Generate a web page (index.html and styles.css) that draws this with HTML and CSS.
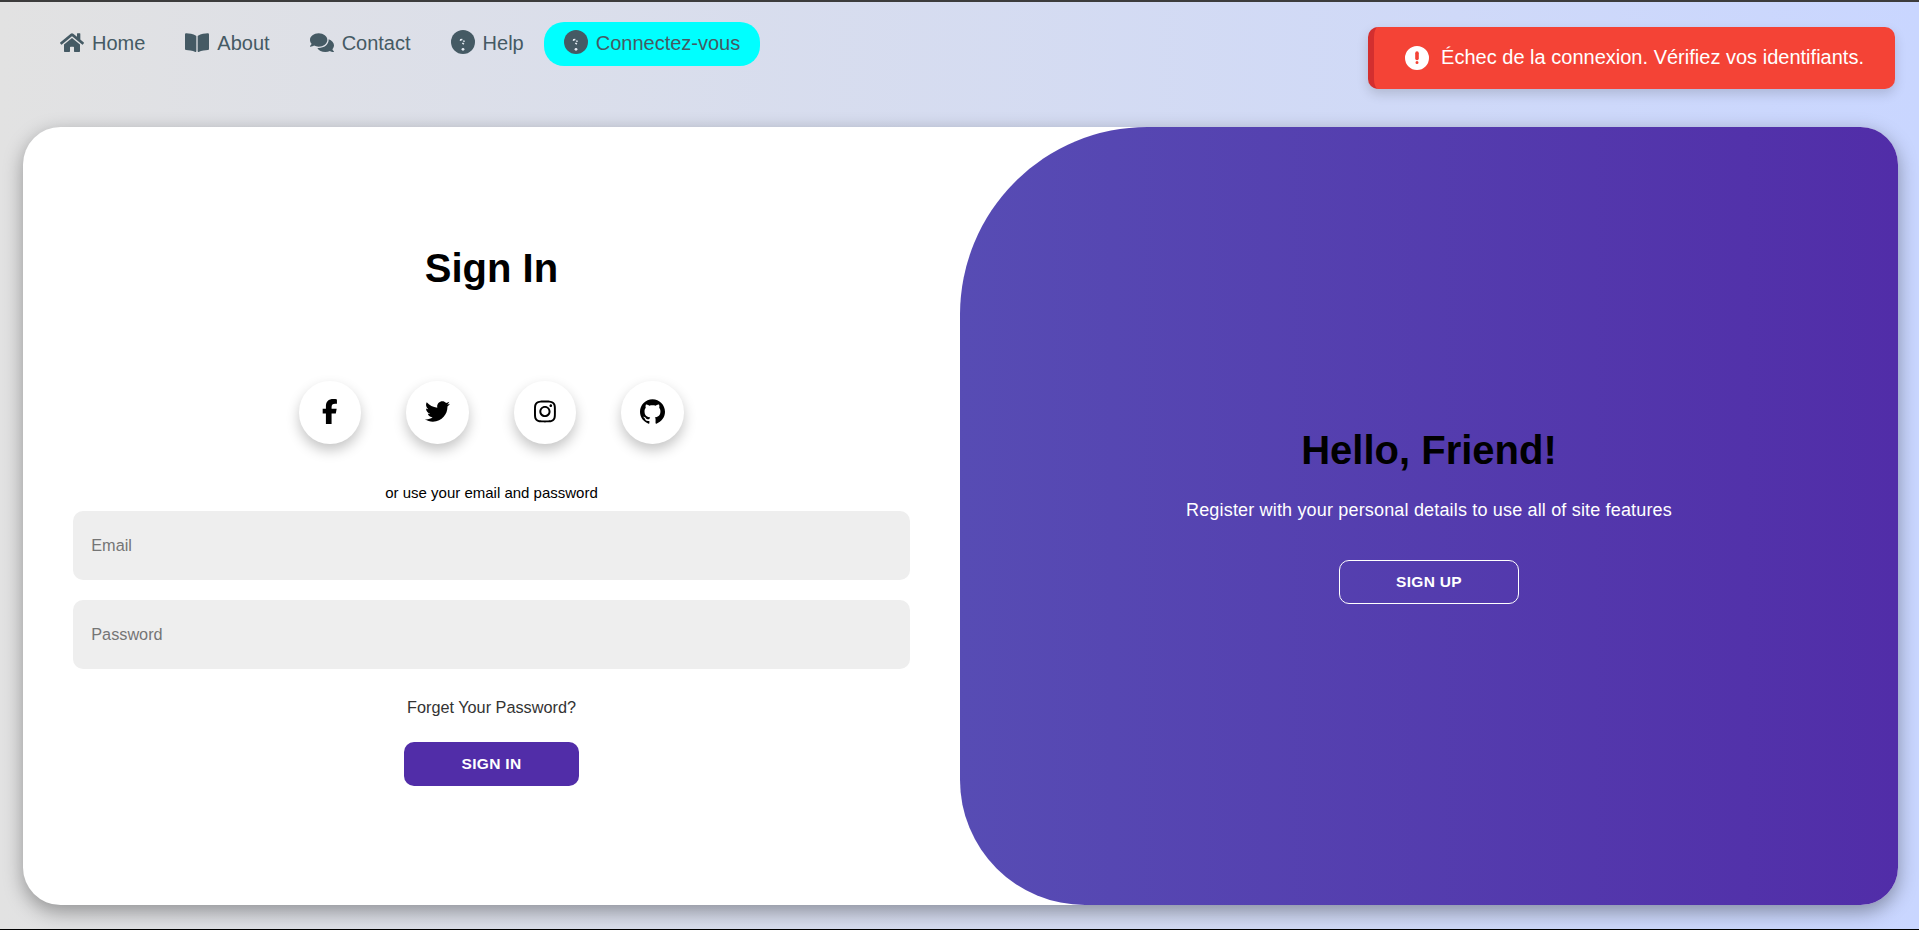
FILE: index.html
```html
<!DOCTYPE html>
<html lang="fr">
<head>
<meta charset="utf-8">
<title>Connexion</title>
<link rel="stylesheet" href="styles.css">
</head>
<body>
<header class="header">
  <nav class="nav">
    <a class="nav-link"><svg class="nav-icon" viewBox="0 0 576 512"><path d="M280.37 148.26L96 300.11V464a16 16 0 0 0 16 16l112.06-.29a16 16 0 0 0 15.92-16V368a16 16 0 0 1 16-16h64a16 16 0 0 1 16 16v95.64a16 16 0 0 0 16 16.05L464 480a16 16 0 0 0 16-16V300L295.67 148.26a12.19 12.19 0 0 0-15.3 0zM571.6 251.47L488 182.56V44.05a12 12 0 0 0-12-12h-56a12 12 0 0 0-12 12v72.61L318.47 43a48 48 0 0 0-61 0L4.34 251.47a12 12 0 0 0-1.6 16.9l25.5 31A12 12 0 0 0 45.15 301l235.22-193.74a12.19 12.19 0 0 1 15.3 0L530.9 301a12 12 0 0 0 16.9-1.6l25.5-31a12 12 0 0 0-1.7-16.93z"/></svg>Home</a>
    <a class="nav-link"><svg class="nav-icon" viewBox="0 0 576 512"><path d="M542.22 32.05c-54.8 3.11-163.72 14.43-230.96 55.59-4.64 2.84-7.27 7.89-7.27 13.17v363.87c0 11.55 12.63 18.85 23.28 13.49 69.18-34.82 169.23-44.32 218.7-46.92 16.89-.89 30.02-14.43 30.02-30.66V62.75c.01-17.71-15.35-31.74-33.77-30.7zM264.73 87.64C197.5 46.48 88.58 35.17 33.78 32.05 15.36 31.01 0 45.04 0 62.75V400.6c0 16.24 13.13 29.78 30.02 30.66 49.49 2.6 149.59 12.11 218.77 46.95 10.62 5.35 23.21-1.94 23.21-13.46V100.63c0-5.29-2.62-10.14-7.27-12.99z"/></svg>About</a>
    <a class="nav-link"><svg class="nav-icon" viewBox="0 0 576 512"><path d="M416 192c0-88.4-93.1-160-208-160S0 103.6 0 192c0 34.3 14.1 65.9 38 92-13.4 30.2-35.5 54.2-35.8 54.5-2.2 2.3-2.8 5.7-1.5 8.7S4.8 352 8 352c36.6 0 66.9-12.3 88.7-25 32.2 15.7 70.3 25 111.3 25 114.9 0 208-71.6 208-160zm122 220c23.900-26 38-57.700 38-92 0-66.900-53.500-124.200-129.300-148.100.9 6.600 1.300 13.300 1.300 20.100 0 105.900-107.700 192-240 192-10.800 0-21.300-.8-31.700-1.900C207.800 439.600 281.800 480 368 480c41 0 79.100-9.200 111.300-25 21.800 12.700 52.100 25 88.700 25 3.200 0 6.100-1.900 7.300-4.800 1.300-2.900.7-6.300-1.500-8.700-.3-.3-22.400-24.200-35.800-54.500z"/></svg>Contact</a>
    <a class="nav-link"><svg class="nav-icon round" viewBox="0 0 24 24"><circle cx="12" cy="12" r="12"/><path class="mark" d="M9.400 10.900 9.700 9.700 11.400 9.500M12.600 10.500 13.300 11.800M11.300 13 12.900 14.200"/><circle class="dot" cx="12" cy="19.300" r="1.400"/></svg>Help</a>
    <a class="nav-link active"><svg class="nav-icon round" viewBox="0 0 24 24"><circle cx="12" cy="12" r="12"/><path class="mark" d="M9.400 10.900 9.700 9.700 11.400 9.500M12.600 10.500 13.300 11.800M11.300 13 12.900 14.200"/><circle class="dot" cx="12" cy="19.300" r="1.400"/></svg>Connectez-vous</a>
  </nav>
  <div class="toast"><svg class="toast-icon" viewBox="0 0 512 512"><path d="M256 512A256 256 0 1 0 256 0a256 256 0 1 0 0 512zm0-384c13.300 0 24 10.700 24 24V264c0 13.300-10.700 24-24 24s-24-10.700-24-24V152c0-13.300 10.700-24 24-24zM224 352a32 32 0 1 1 64 0 32 32 0 1 1-64 0z" stroke="none"/><path class="toast-mark" d="M256 152V264"/></svg>Échec de la connexion. Vérifiez vos identifiants.</div>
</header>
<main class="card">
  <form class="signin">
    <h1 class="title">Sign In</h1>
    <div class="socials">
      <a class="social"><svg class="social-icon" viewBox="0 0 320 512"><path d="M80 299.300V512H196V299.300h86.500l18-97.800H196V166.900c0-51.700 20.300-71.500 72.700-71.500c16.300 0 29.400 .4 37 1.200V7.900C291.400 4 256.400 0 236.200 0C129.300 0 80 50.500 80 159.400v42.100H14v97.800H80z"/></svg></a>
      <a class="social"><svg class="social-icon" viewBox="0 0 512 512"><path d="M459.370 151.716c.325 4.548.325 9.097.325 13.645 0 138.720-105.583 298.558-298.558 298.558-59.452 0-114.680-17.219-161.137-47.106 8.447.974 16.568 1.299 25.340 1.299 49.055 0 94.213-16.568 130.274-44.832-46.132-.975-84.792-31.188-98.112-72.772 6.498.974 12.995 1.624 19.818 1.624 9.421 0 18.843-1.300 27.614-3.573-48.081-9.747-84.143-51.980-84.143-102.985v-1.299c13.969 7.797 30.214 12.670 47.431 13.319-28.264-18.843-46.781-51.005-46.781-87.391 0-19.492 5.197-37.360 14.294-52.954 51.655 63.675 129.300 105.258 216.365 109.807-1.624-7.797-2.599-15.918-2.599-24.040 0-57.828 46.782-104.934 104.934-104.934 30.213 0 57.502 12.670 76.670 33.137 23.715-4.548 46.456-13.320 66.599-25.340-7.798 24.366-24.366 44.833-46.132 57.827 21.117-2.273 41.584-8.122 60.426-16.243-14.292 20.791-32.161 39.308-52.628 54.253z"/></svg></a>
      <a class="social"><svg class="social-icon" viewBox="0 0 448 512"><path d="M224.100 141c-63.600 0-114.900 51.300-114.900 114.900s51.300 114.900 114.900 114.900S339 319.500 339 255.900 287.700 141 224.100 141zm0 189.600c-41.100 0-74.700-33.500-74.700-74.700s33.500-74.700 74.700-74.700 74.700 33.500 74.700 74.700-33.600 74.700-74.700 74.700zm146.400-194.300c0 14.900-12 26.800-26.800 26.800-14.900 0-26.800-12-26.800-26.800s12-26.800 26.800-26.800 26.800 12 26.800 26.800zm76.100 27.200c-1.700-35.900-9.900-67.700-36.200-93.900-26.200-26.200-58-34.400-93.900-36.200-37-2.100-147.900-2.100-184.900 0-35.800 1.700-67.600 9.900-93.900 36.100s-34.400 58-36.200 93.900c-2.100 37-2.100 147.900 0 184.900 1.700 35.900 9.900 67.700 36.200 93.900s58 34.400 93.900 36.200c37 2.100 147.900 2.100 184.900 0 35.900-1.700 67.700-9.900 93.900-36.200 26.200-26.200 34.400-58 36.200-93.900 2.100-37 2.100-147.800 0-184.800zM398.800 388c-7.800 19.600-22.900 34.700-42.600 42.600-29.500 11.700-99.500 9-132.100 9s-102.700 2.600-132.100-9c-19.600-7.800-34.700-22.900-42.600-42.600-11.700-29.500-9-99.500-9-132.100s-2.600-102.700 9-132.100c7.800-19.600 22.900-34.700 42.600-42.600 29.500-11.700 99.500-9 132.100-9s102.700-2.600 132.100 9c19.600 7.800 34.700 22.900 42.600 42.600 11.700 29.500 9 99.500 9 132.100s2.700 102.700-9 132.100z"/></svg></a>
      <a class="social"><svg class="social-icon" viewBox="0 0 24 24"><path d="M12 .297c-6.630 0-12 5.373-12 12 0 5.303 3.438 9.800 8.205 11.385.6.113.82-.258.82-.577 0-.285-.01-1.040-.015-2.040-3.338.724-4.042-1.610-4.042-1.610C4.422 18.070 3.633 17.700 3.633 17.700c-1.087-.744.084-.729.084-.729 1.205.084 1.838 1.236 1.838 1.236 1.070 1.835 2.809 1.305 3.495.998.108-.776.417-1.305.76-1.605-2.665-.3-5.466-1.332-5.466-5.930 0-1.310.465-2.380 1.235-3.220-.135-.303-.54-1.523.105-3.176 0 0 1.005-.322 3.300 1.230.96-.267 1.980-.399 3-.405 1.020.006 2.040.138 3 .405 2.280-1.552 3.285-1.230 3.285-1.230.645 1.653.24 2.873.12 3.176.765.84 1.230 1.910 1.230 3.220 0 4.610-2.805 5.625-5.475 5.920.42.36.81 1.096.81 2.220 0 1.606-.015 2.896-.015 3.286 0 .315.210.69.825.57C20.565 22.092 24 17.592 24 12.297c0-6.627-5.373-12-12-12"/></svg></a>
    </div>
    <span class="hint">or use your email and password</span>
    <input class="field" type="email" placeholder="Email">
    <input class="field" type="password" placeholder="Password">
    <a class="forgot">Forget Your Password?</a>
    <button class="button" type="button">Sign In</button>
  </form>
  <section class="welcome">
    <h1 class="title">Hello, Friend!</h1>
    <p class="lead">Register with your personal details to use all of site features</p>
    <button class="button outline" type="button">Sign Up</button>
  </section>
</main>
</body>
</html>
```
FILE: styles.css
```css
* { box-sizing: border-box; margin: 0; padding: 0; }

body {
  height: 930px;
  overflow: hidden;
  border-top: 2px solid #3c3c3c;
  border-bottom: 1px solid #000;
  background: linear-gradient(to right, #e2e2e2, #c9d6ff);
  font-family: "Liberation Sans", Arial, sans-serif;
}

.header {
  display: flex;
  justify-content: space-between;
  align-items: flex-start;
  height: 125px;
  padding: 20px 24px 0 40px;
}

.nav { display: flex; }

.nav-link {
  display: flex;
  align-items: center;
  height: 44px;
  padding: 0 20px 2px;
  border-radius: 20px;
  color: #455a64;
  font-size: 20px;
}

.nav-link.active { background: #00ffff; }

.nav-icon {
  width: 24px;
  height: 21.330px;
  margin-right: 8px;
  fill: #455a64;
}

.nav-icon.round { height: 24px; margin-top: -2px; }
.mark { fill: none; stroke: #e4eaf2; stroke-width: 1.500; }
.dot { fill: #e4eaf2; }

.toast {
  display: flex;
  align-items: center;
  height: 62px;
  margin-top: 5px;
  padding: 0 31px 2px;
  border-left: 6px solid #d32f2f;
  border-radius: 10px;
  background: #f44336;
  box-shadow: 0 5px 12px rgba(0, 0, 0, 0.15);
  color: #fff;
  font-size: 20px;
  letter-spacing: 0.010px;
}

.toast-icon { width: 24px; height: 24px; margin: 2px 12px 0 0; fill: #fff; }
.toast-mark { stroke: #f44336; stroke-width: 76; stroke-linecap: round; }

.card {
  display: flex;
  width: 1875px;
  height: 778px;
  margin-left: 23px;
  border-radius: 37.500px;
  background: #fff;
  box-shadow: 0 6.250px 18.750px rgba(0, 0, 0, 0.35);
  overflow: hidden;
}

.signin {
  display: flex;
  flex-direction: column;
  align-items: center;
  width: 937px;
  padding: 118px 50px 0;
}

.title { font-size: 40px; line-height: 46px; }

.socials { display: flex; gap: 45px; margin: 90px 1px 40px 0; }

.social {
  display: flex;
  align-items: center;
  justify-content: center;
  width: 62.500px;
  height: 62.500px;
  padding-bottom: 1px;
  border-radius: 50%;
  background: #fff;
  box-shadow: 0 6.250px 12.500px rgba(0, 0, 0, 0.23);
}

.social-icon { height: 25px; }

.hint { font-size: 15px; line-height: 17px; }

.field {
  width: 100%;
  height: 69px;
  margin: 10px 0;
  padding: 0 18.250px;
  border: 0;
  border-radius: 10px;
  background: #eee;
  font: 16.250px "Liberation Sans", Arial, sans-serif;
}

.forgot {
  margin: 19px 0 25px;
  color: #333;
  font-size: 16.250px;
  line-height: 19px;
}

.button {
  height: 44px;
  padding: 0 56.500px;
  border: 1px solid transparent;
  border-radius: 10px;
  background: #512da8;
  color: #fff;
  font: bold 15.500px "Liberation Sans", Arial, sans-serif;
  letter-spacing: 0.300px;
  text-transform: uppercase;
}

.button.outline { background: transparent; border-color: #fff; }

.welcome {
  display: flex;
  flex-direction: column;
  align-items: center;
  width: 938px;
  padding-top: 300px;
  border-radius: 187.500px 0 0 125px;
  background: linear-gradient(to right, #574cb4, #512da8);
}

.lead {
  margin: 26px 0 38px;
  color: #fff;
  font-size: 18px;
  line-height: 23px;
  letter-spacing: 0.170px;
}
```
